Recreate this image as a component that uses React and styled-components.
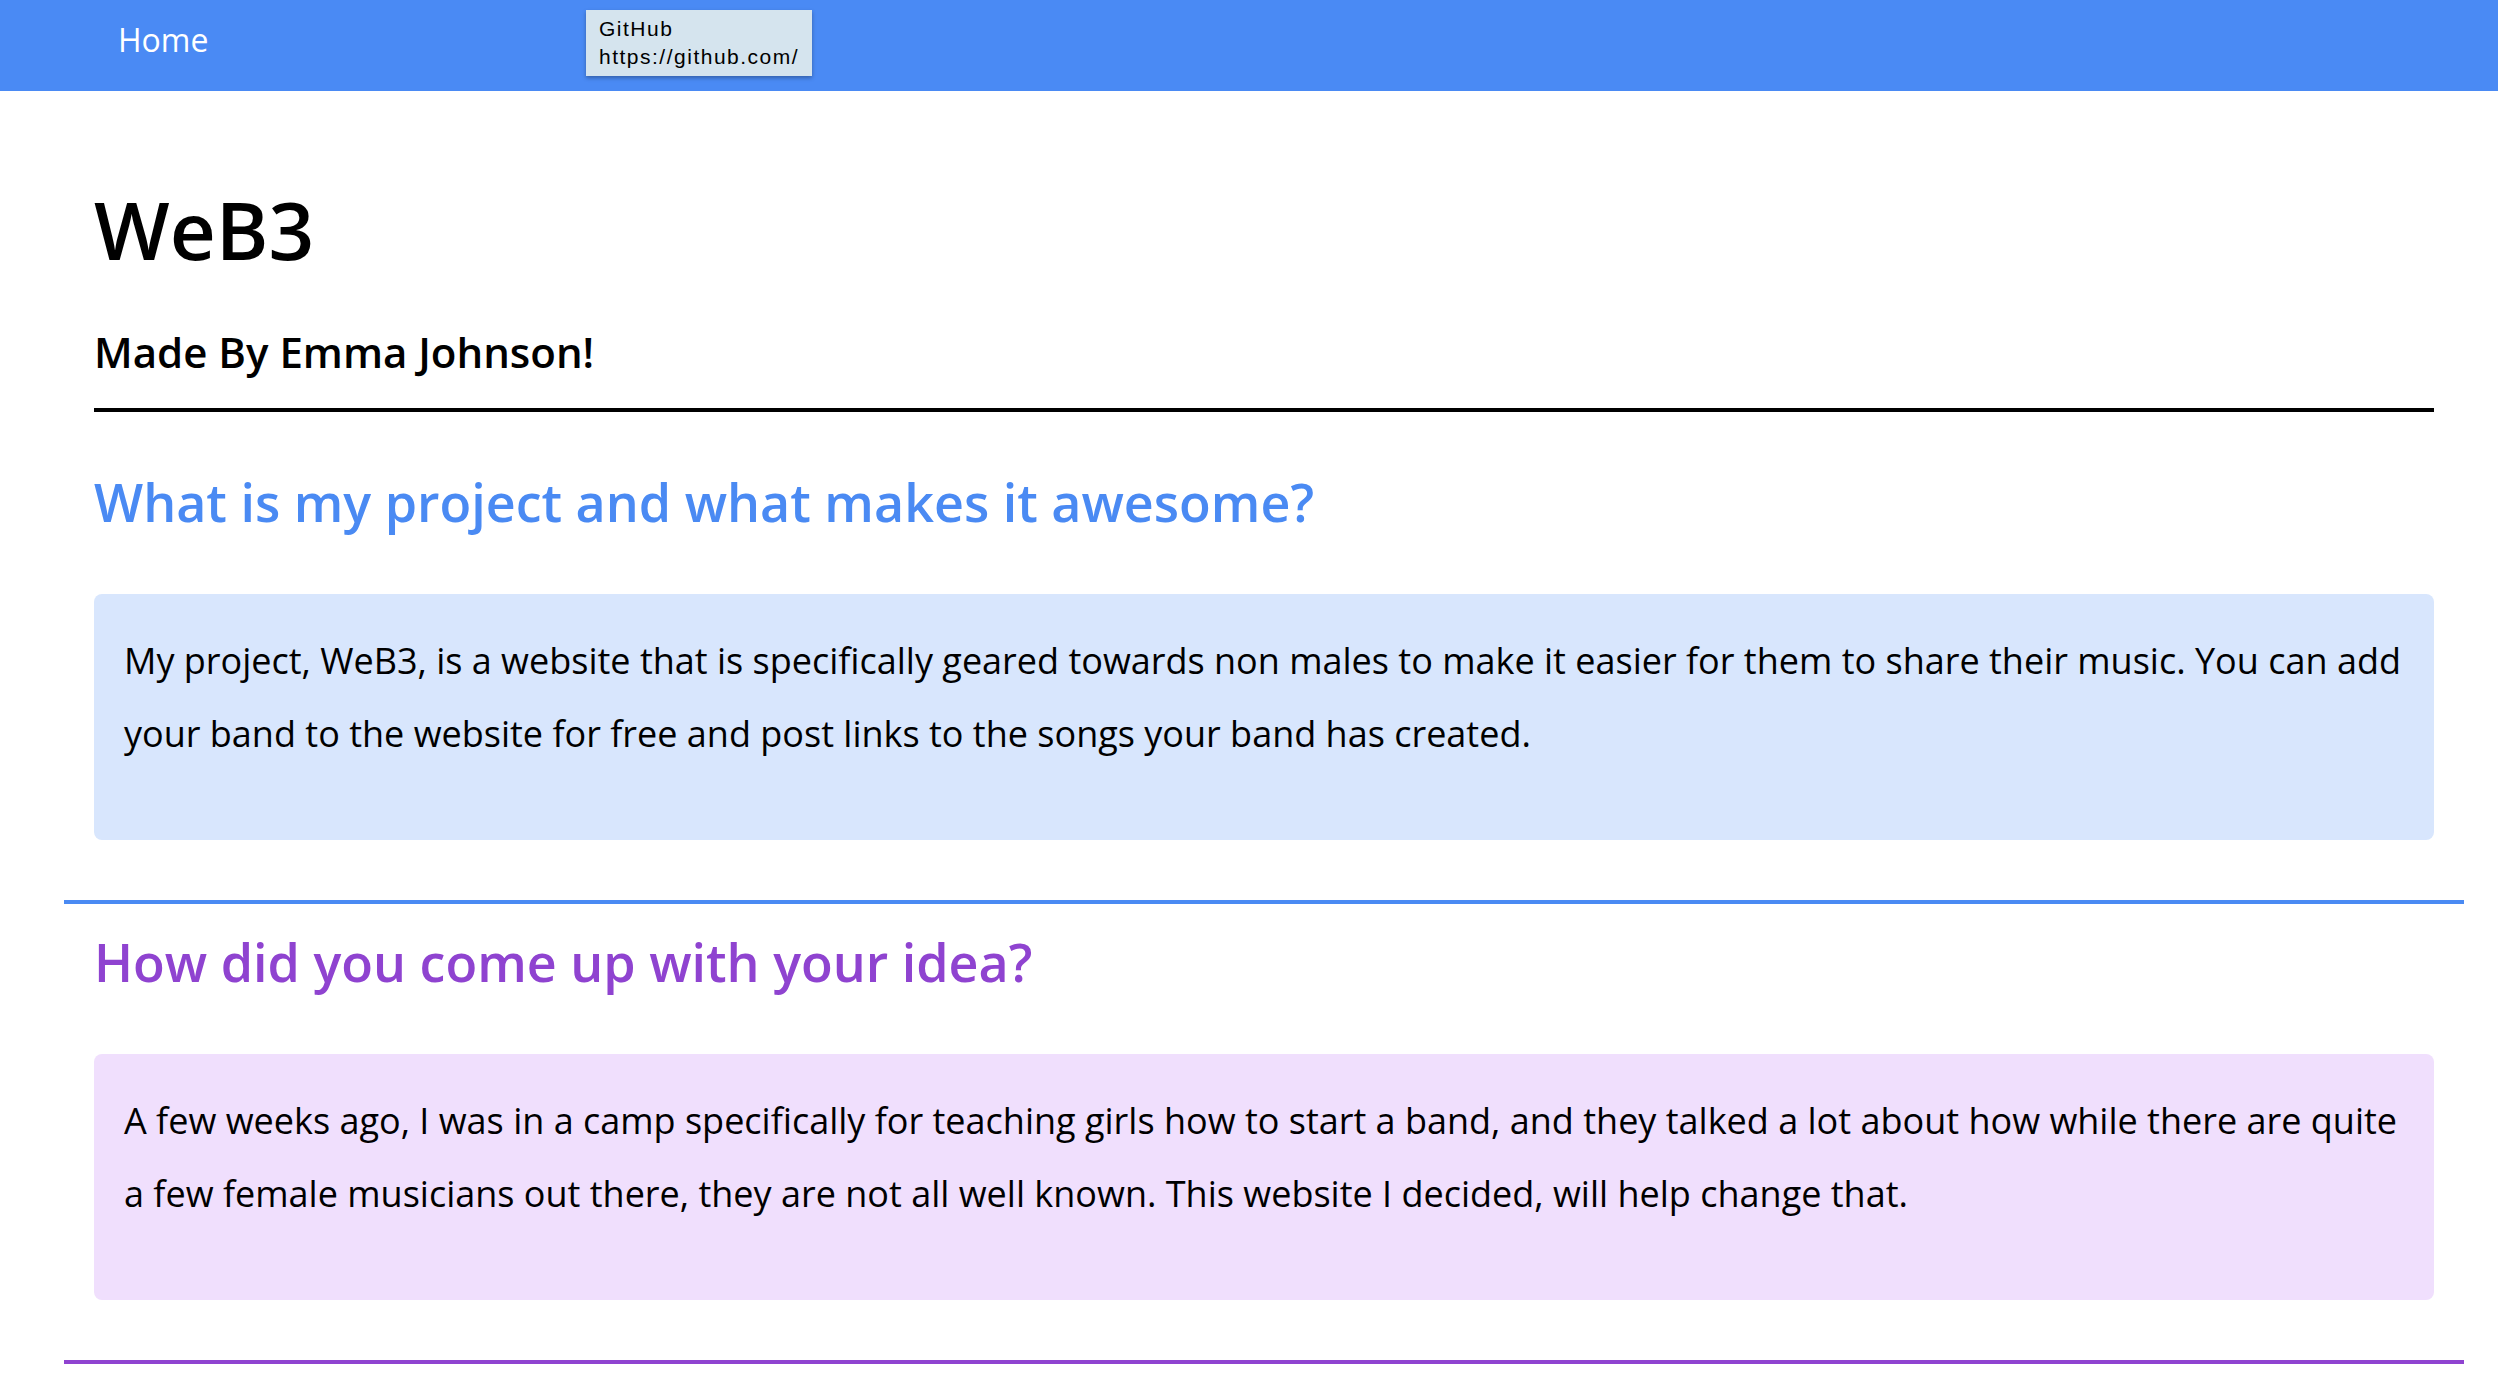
import React from 'react'
import styled, { createGlobalStyle } from 'styled-components'

const GlobalStyle = createGlobalStyle`
    body {
        margin: 0;
        background: #ffffff;
        font-family: "Open Sans", "Liberation Sans", sans-serif;
        color: #000000;
    }
`

const tones = {
    blue: { ink: '#4a8af3', wash: '#d8e6fd' },
    purple: { ink: '#8f43d0', wash: '#f0dffd' },
}

const NavBar = styled.nav`
    position: relative;
    display: flex;
    align-items: flex-start;
    height: 91px;
    box-sizing: border-box;
    padding: 18px 0 0 118px;
    background: #4a8af4;
`

const NavLink = styled.a`
    color: #ffffff;
    font-size: 32px;
    line-height: 44px;
    text-decoration: none;
`

const Tooltip = styled.div`
    position: absolute;
    left: 586px;
    top: 10px;
    padding: 5px 13px;
    background: #d5e4ee;
    box-shadow: 0 2px 4px rgba(0, 0, 0, 0.3);
    font-family: "Liberation Sans", Arial, sans-serif;
    font-size: 21px;
    line-height: 28px;
    letter-spacing: 1.5px;
    color: #000000;
    white-space: nowrap;
`

const Main = styled.main`
    padding: 0 34px 0 64px;
`

const Intro = styled.header`
    padding: 0 30px;
`

const Title = styled.h1`
    margin: 90px 0 0;
    font-size: 80px;
    font-weight: 600;
    line-height: 96px;
`

const Byline = styled.h3`
    margin: 50px 0 0;
    font-size: 42px;
    font-weight: 600;
    line-height: 50px;
`

const Rule = styled.hr`
    margin: 31px 0 0;
    border: 0;
    height: 4px;
    background: #000000;
`

const Section = styled.section`
    padding: 0 30px;
`

const Heading = styled.h2`
    margin: ${({ $gap }) => $gap}px 0 0;
    font-size: 52px;
    font-weight: 600;
    line-height: 64px;
    color: ${({ $tone }) => tones[$tone].ink};
`

const Card = styled.div`
    margin-top: 60px;
    padding: 30px 30px 70px;
    border-radius: 8px;
    background: ${({ $tone }) => tones[$tone].wash};

    p {
        margin: 0;
        font-size: 36px;
        line-height: 73px;
    }
`

const Divider = styled.div`
    height: 4px;
    margin-top: 60px;
    background: ${({ $tone }) => tones[$tone].ink};
`

const sections = [
    {
        tone: 'blue',
        gap: 58,
        title: 'What is my project and what makes it awesome?',
        text: 'My project, WeB3, is a website that is specifically geared towards non males to make it easier for them to share their music. You can add your band to the website for free and post links to the songs your band has created.',
    },
    {
        tone: 'purple',
        gap: 26,
        title: 'How did you come up with your idea?',
        text: 'A few weeks ago, I was in a camp specifically for teaching girls how to start a band, and they talked a lot about how while there are quite a few female musicians out there, they are not all well known. This website I decided, will help change that.',
    },
]

const App = () => {
    return (
        <>
            <GlobalStyle />
            <NavBar>
                <NavLink href="#">Home</NavLink>
                <Tooltip>
                    GitHub
                    <br />
                    https://github.com/
                </Tooltip>
            </NavBar>
            <Main>
                <Intro>
                    <Title>WeB3</Title>
                    <Byline>Made By Emma Johnson!</Byline>
                    <Rule />
                </Intro>
                {sections.map(s => (
                    <React.Fragment key={s.title}>
                        <Section>
                            <Heading $tone={s.tone} $gap={s.gap}>{s.title}</Heading>
                            <Card $tone={s.tone}>
                                <p>{s.text}</p>
                            </Card>
                        </Section>
                        <Divider $tone={s.tone} />
                    </React.Fragment>
                ))}
            </Main>
        </>
    )
}

export default App
